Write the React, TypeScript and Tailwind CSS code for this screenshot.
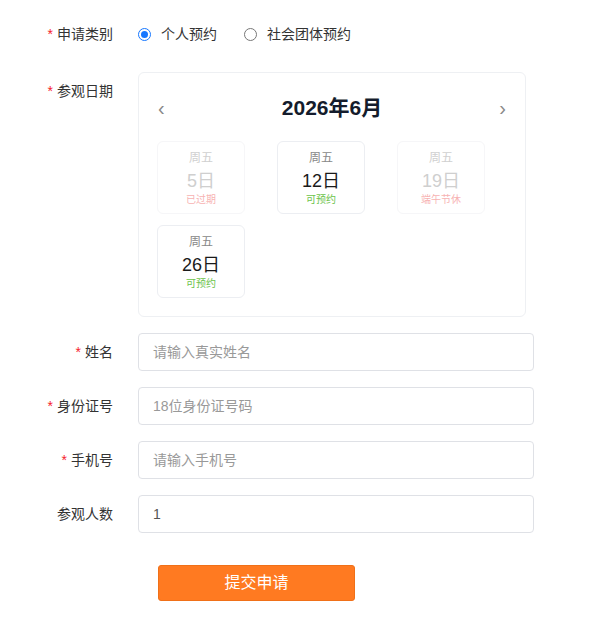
import React from 'react';

const days = [
  { week: '周五', day: '5日', status: '已过期', disabled: true },
  { week: '周五', day: '12日', status: '可预约', disabled: false },
  { week: '周五', day: '19日', status: '端午节休', disabled: true },
  { week: '周五', day: '26日', status: '可预约', disabled: false },
];

const fields = [
  { label: '姓名', required: true, placeholder: '请输入真实姓名', value: '' },
  { label: '身份证号', required: true, placeholder: '18位身份证号码', value: '' },
  { label: '手机号', required: true, placeholder: '请输入手机号', value: '' },
  { label: '参观人数', required: false, placeholder: '', value: '1' },
];

const Label = ({ text, required }: { text: string; required?: boolean }) => (
  <div className="w-[113px] shrink-0 text-right text-[14px] text-[#333] leading-[20px]">
    {required && <span className="text-[#f5222d] mr-1">*</span>}
    {text}
  </div>
);

const Radio = ({ checked, text }: { checked: boolean; text: string }) => (
  <label className="flex items-center">
    <span
      className={`w-[13px] h-[13px] rounded-full border flex items-center justify-center ${
        checked ? 'border-[#1677ff]' : 'border-[#777]'
      }`}
    >
      {checked && <span className="w-[7px] h-[7px] rounded-full bg-[#1677ff]" />}
    </span>
    <span className="ml-[10px] text-[14px] text-[#333]">{text}</span>
  </label>
);

export default function App() {
  return (
    <div
      className="w-[600px] h-[620px] bg-white pt-[24px]"
      style={{ fontFamily: '"Liberation Sans", "Noto Sans CJK SC", sans-serif' }}
    >
      <div className="flex items-center h-[20px]">
        <Label text="申请类别" required />
        <div className="ml-[25px] flex items-center gap-[27px]">
          <Radio checked text="个人预约" />
          <Radio checked={false} text="社会团体预约" />
        </div>
      </div>

      <div className="flex mt-[28px]">
        <div className="pt-[9px]">
          <Label text="参观日期" required />
        </div>
        <div className="ml-[25px] w-[388px] border border-[#eef0f3] rounded-[6px] px-[18px] pt-[21px] pb-[18px]">
          <div className="flex items-center justify-between h-[28px] px-[1px]">
            <span className="text-[20px] text-[#888] leading-none">‹</span>
            <span className="text-[21px] font-bold text-[#141c2c]">2026年6月</span>
            <span className="text-[20px] text-[#888] leading-none">›</span>
          </div>
          <div className="mt-[19px] flex flex-wrap gap-x-[32px] gap-y-[11px]">
            {days.map((d, i) => (
              <div
                key={i}
                className={`w-[88px] h-[73px] rounded-[6px] border flex flex-col items-center pt-[8px] ${
                  d.disabled ? 'border-[#f6f6f8]' : 'border-[#eceef2]'
                }`}
              >
                <span className={`text-[12px] leading-[16px] mb-[3px] ${d.disabled ? 'text-[#d0d0d0]' : 'text-[#888]'}`}>
                  {d.week}
                </span>
                <span className={`text-[18px] leading-[24px] ${d.disabled ? 'text-[#cfcfcf]' : 'text-[#1a1a1a]'}`}>
                  {d.day}
                </span>
                <span className={`text-[10px] leading-[14px] ${d.disabled ? 'text-[#f7b3b3]' : 'text-[#6cc34a]'}`}>
                  {d.status}
                </span>
              </div>
            ))}
          </div>
        </div>
      </div>

      <div className="mt-[16px] flex flex-col gap-[16px]">
        {fields.map((f) => (
          <div key={f.label} className="flex items-center">
            <Label text={f.label} required={f.required} />
            <input
              className="ml-[25px] w-[396px] h-[38px] border border-[#dfe1e6] rounded-[4px] px-[14px] text-[14px] text-[#555] placeholder:text-[#999] outline-none"
              placeholder={f.placeholder}
              defaultValue={f.value}
            />
          </div>
        ))}
      </div>

      <div className="mt-[32px] pl-[158px]">
        <button className="w-[197px] h-[36px] bg-[#ff7a21] border border-[#f07018] rounded-[3px] text-white text-[16px]">
          提交申请
        </button>
      </div>
    </div>
  );
}
